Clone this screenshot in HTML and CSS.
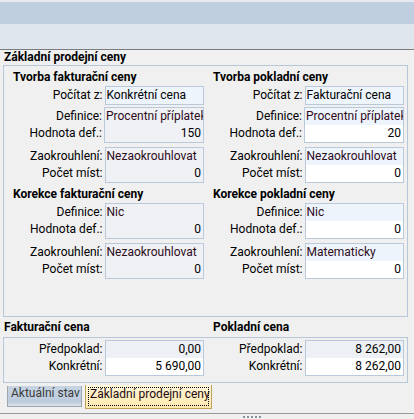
FILE: index.html
```html
<!DOCTYPE html>
<html lang="cs">
<head>
<meta charset="utf-8">
<title>Základní prodejní ceny</title>
<link rel="stylesheet" href="styles.css">
</head>
<body>
<div class="topbar"></div>
<div class="subbar"></div>
<div class="content">
  <div class="section-title">Základní prodejní ceny</div>
  <div class="group main">
    <div class="col">
      <div class="sub-title">Tvorba fakturační ceny</div>
      <div class="pair first">
        <div class="labels"><div class="l">Počítat z:</div></div>
        <div class="box"><div class="v blue">Konkrétní cena</div></div>
      </div>
      <div class="pair gap2">
        <div class="labels"><div class="l">Definice:</div><div class="l">Hodnota def.:</div></div>
        <div class="box"><div class="v grey combo">Procentní příplatek</div><div class="v grey num">150</div></div>
      </div>
      <div class="pair gap4">
        <div class="labels"><div class="l">Zaokrouhlení:</div><div class="l">Počet míst:</div></div>
        <div class="box"><div class="v grey combo">Nezaokrouhlovat</div><div class="v grey num">0</div></div>
      </div>
      <div class="sub-title">Korekce fakturační ceny</div>
      <div class="pair first">
        <div class="labels"><div class="l">Definice:</div><div class="l">Hodnota def.:</div></div>
        <div class="box"><div class="v grey combo">Nic</div><div class="v grey num">0</div></div>
      </div>
      <div class="pair gap4">
        <div class="labels"><div class="l">Zaokrouhlení:</div><div class="l">Počet míst:</div></div>
        <div class="box"><div class="v grey combo">Nezaokrouhlovat</div><div class="v grey num">0</div></div>
      </div>
    </div>
    <div class="col">
      <div class="sub-title">Tvorba pokladní ceny</div>
      <div class="pair first">
        <div class="labels"><div class="l">Počítat z:</div></div>
        <div class="box"><div class="v blue">Fakturační cena</div></div>
      </div>
      <div class="pair gap2">
        <div class="labels"><div class="l">Definice:</div><div class="l">Hodnota def.:</div></div>
        <div class="box"><div class="v blue combo">Procentní příplatek</div><div class="v white num">20</div></div>
      </div>
      <div class="pair gap4">
        <div class="labels"><div class="l">Zaokrouhlení:</div><div class="l">Počet míst:</div></div>
        <div class="box"><div class="v blue combo">Nezaokrouhlovat</div><div class="v white num">0</div></div>
      </div>
      <div class="sub-title">Korekce pokladní ceny</div>
      <div class="pair first">
        <div class="labels"><div class="l">Definice:</div><div class="l">Hodnota def.:</div></div>
        <div class="box"><div class="v blue combo">Nic</div><div class="v white num">0</div></div>
      </div>
      <div class="pair gap4">
        <div class="labels"><div class="l">Zaokrouhlení:</div><div class="l">Počet míst:</div></div>
        <div class="box"><div class="v blue combo">Matematicky</div><div class="v white num">0</div></div>
      </div>
    </div>
  </div>

  <div class="price-titles">
    <div class="pt">Fakturační cena</div>
    <div class="pt">Pokladní cena</div>
  </div>
  <div class="group prices">
    <div class="col">
      <div class="pair">
        <div class="labels"><div class="l">Předpoklad:</div><div class="l">Konkrétní:</div></div>
        <div class="box"><div class="v pale num">0,00</div><div class="v white num">5 690,00</div></div>
      </div>
    </div>
    <div class="col">
      <div class="pair">
        <div class="labels"><div class="l">Předpoklad:</div><div class="l">Konkrétní:</div></div>
        <div class="box"><div class="v pale num">8 262,00</div><div class="v white num">8 262,00</div></div>
      </div>
    </div>
  </div>

  <div class="tabs">
    <div class="tab inactive">Aktuální stav</div>
    <div class="tab active"><span class="focus">Základní prodejní ceny</span></div>
  </div>
</div>
<div class="status">
  <div class="grip"><i></i><i></i><i></i><i></i><i></i></div>
</div>
</body>
</html>
```

FILE: styles.css
```css
* {
  box-sizing: border-box;
  margin: 0;
  padding: 0;
}

html, body {
  width: 414px;
  height: 419px;
  overflow: hidden;
}

body {
  background: #f0f0f0;
  font-family: Roboto, "Liberation Sans", sans-serif;
  font-size: 12px;
  color: #000;
}

.topbar {
  height: 24px;
  background: #bfcfdf;
  border-top: 2px solid #e6eaf0;
}

.subbar {
  height: 26px;
  background: #e0e6ee;
  border-bottom: 1px solid #7c7c7c;
}

.content {
  padding: 0 6px 0 3px;
}

.section-title {
  font-weight: bold;
  line-height: 15px;
  height: 15px;
  padding-left: 1px;
}

.group {
  border: 1px solid #b7c7d9;
  display: flex;
}

.group.main {
  height: 252px;
}

.col {
  width: 200px;
}

.sub-title {
  font-weight: bold;
  line-height: 15px;
  height: 15px;
  margin-top: 4px;
  padding-left: 9px;
}

.pair {
  display: flex;
  gap: 2px;
}

.pair.first {
  margin-top: 1px;
}

.pair.gap2 {
  margin-top: 2px;
}

.pair.gap4 {
  margin-top: 4px;
}

.labels {
  width: 99px;
  padding-top: 1px;
  text-align: right;
}

.l {
  height: 17px;
  line-height: 17px;
  white-space: nowrap;
}

.box {
  width: 100px;
  border: 1px solid #b9c8da;
}

.v {
  height: 17px;
  line-height: 17px;
  padding: 0 2px 0 1px;
  white-space: nowrap;
  overflow: hidden;
}

.v.num {
  text-align: right;
}

.v.combo {
  color: #2e0c1c;
}

.v.blue {
  background: #eef4fc;
}

.v.white {
  background: #ffffff;
}

.v.grey {
  background: #eff1f4;
}

.v.pale {
  background: #edf0f4;
}

.price-titles {
  display: flex;
  margin-top: 3px;
  height: 15px;
  line-height: 15px;
  font-weight: bold;
  padding-left: 1px;
}

.price-titles .pt:first-child {
  width: 209px;
}

.group.prices {
  margin-top: 2px;
  height: 46px;
  padding-top: 2px;
}

.tabs {
  display: flex;
  align-items: flex-start;
  height: 30px;
  padding-left: 4px;
}

.tab {
  white-space: nowrap;
}

.tab.inactive {
  margin-top: 3px;
  width: 75px;
  height: 21px;
  padding: 1px 0 0 3px;
  line-height: 13px;
  color: #3a3a3a;
  background: linear-gradient(#c6d4e3, #bccbdc 80%, #dfe5ec);
  border: 1px solid #9ea6ae;
  border-top: none;
}

.tab.active {
  margin-top: 2px;
  margin-left: 3px;
  width: 127px;
  height: 24px;
  padding: 2px;
  background: linear-gradient(#fff6da, #ffe9ad);
  border: 1px solid #bfa25e;
  border-top: none;
  color: #1e0a10;
}

.focus {
  display: block;
  height: 19px;
  line-height: 13px;
  padding-left: 1px;
  border: 1px dotted #000;
}

.status {
  border-top: 1px solid #9a9a9a;
  height: 6px;
}

.grip {
  display: flex;
  gap: 2px;
  padding: 2px 0 0 243px;
}

.grip i {
  display: block;
  width: 2px;
  height: 2px;
  background: #8a929a;
}
```
